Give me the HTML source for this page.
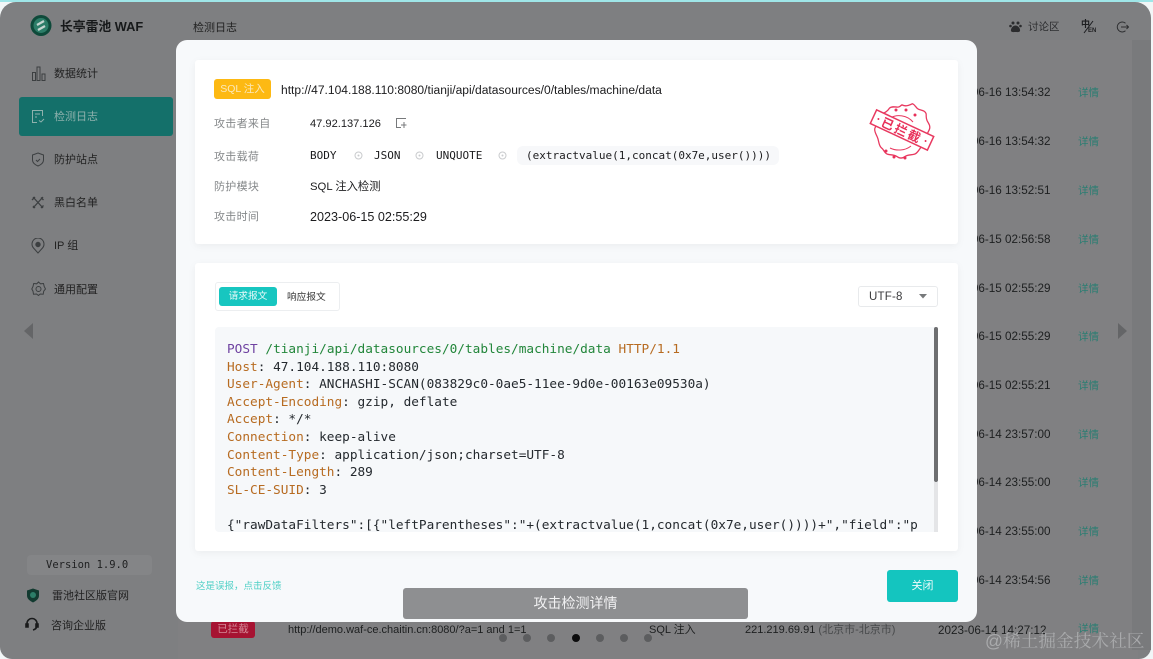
<!DOCTYPE html>
<html><head><meta charset="utf-8"><style>
*{box-sizing:border-box;margin:0;padding:0}
html,body{width:1153px;height:659px;overflow:hidden;background:#f2f6f7}
body{position:relative;font-family:"Liberation Sans","Noto Sans CJK SC",sans-serif;color:#1c1c1e}
.a{position:absolute;white-space:nowrap}
.mono{font-family:"DejaVu Sans Mono","Liberation Mono",monospace}
.nav{left:54px;font-size:11px;color:#222;line-height:16px}
.ic{position:absolute;fill:none;stroke:#3c3f41;stroke-width:1}
.t{font-size:11.7px;color:#1d1f20;left:942px;line-height:14px}
.d{font-size:10.5px;color:#2b7d72;left:1078px;line-height:14px}
.l{font-size:11px;color:#85888a;left:214px;line-height:16px;letter-spacing:.3px}
.v{font-size:12.6px;color:#1c1c1e;left:310px;line-height:16px}
.card{position:absolute;background:#fff;border-radius:3px;box-shadow:0 2px 8px rgba(0,0,0,.05)}
pre{font-family:"DejaVu Sans Mono","Liberation Mono",monospace;font-size:12.75px;line-height:17.6px;color:#24292e;white-space:pre}
.k{color:#b76b21}
.dot{position:absolute;top:634px;width:8px;height:8px;border-radius:50%;background:#5c5d5f}
.m11{font-size:11px;line-height:16px;color:#1c1c1e}
</style></head><body>
<div class="a" style="left:0;top:0;width:1153px;height:2px;background:#9fe6e8"></div>
<div class="a" style="left:0;top:2px;width:1151px;height:657px;background:#7e7f81;border-radius:16px 16px 12px 12px"></div>
<div class="a" style="left:178px;top:40px;width:960px;height:619px;background:#808082"></div>
<div class="a" style="left:1132px;top:40px;width:19px;height:610px;background:#797a7c"></div>

<svg class="a" style="left:30px;top:14px" width="23" height="23" viewBox="0 0 23 23"><circle cx="11" cy="11.500" r="10.500" fill="#0e4a3a"/><circle cx="11" cy="11.500" r="7.500" fill="#2c7d68"/><path d="M7 11l7-4M8 16l7-4" stroke="#c5d5d0" stroke-width="2.200"/></svg>
<div class="a" style="left:60px;top:18px;font-size:12.800px;font-weight:700;color:#17191a;line-height:18px">长亭雷池 WAF</div>
<div class="a" style="left:193px;top:21px;font-size:11px;color:#222;line-height:15px">检测日志</div>

<div class="a" style="left:19px;top:97px;width:154px;height:39px;background:#14706a;border-radius:3px"></div>
<svg class="ic" style="left:31px;top:66px" width="15" height="15" viewBox="0 0 15 15"><path d="M1.500 6.500h3v8h-3zM6 1h3v13.500H6zM11 8h3v6.500h-3z"/></svg>
<svg class="ic" style="left:31px;top:109px;stroke:#8fb1ad" width="14" height="15" viewBox="0 0 14 15"><path d="M6 13.500H1.500v-12h10V7M4 5h5M4 8h2"/><path d="M8 11.500l2 1.500 3-3"/></svg>
<svg class="ic" style="left:31px;top:152px" width="14" height="15" viewBox="0 0 14 15"><path d="M7 1l5.500 2v5c0 3-3 5-5.500 6-2.500-1-5.500-3-5.500-6V3z"/><path d="M5 8l1.500 1.500L9 7"/></svg>
<svg class="ic" style="left:31px;top:195px" width="14" height="15" viewBox="0 0 14 15"><path d="M2 2l10 11M12 2L2 13M1 5l3-3M10 2.500l2.500 2.500M2 11l2 2M10 13l2.500-2.500" stroke-width="1.300"/></svg>
<svg class="ic" style="left:31px;top:238px" width="14" height="16" viewBox="0 0 14 16"><path d="M7 15l-4.500-5a6 6 0 1 1 9 0z"/><circle cx="7" cy="6.500" r="2.200" fill="#3c3f41"/></svg>
<svg class="ic" style="left:31px;top:281px" width="15" height="16" viewBox="0 0 15 16"><path d="M7.500 1l2 1.800 3-.3.700 3 1.300 2.500-1.800 2.200-.5 3-3-.2-1.700 1.500-2-1.500-3 .2-.5-3L.800 8 2 5.500l.7-3 3 .3z"/><circle cx="7.500" cy="8" r="2.500"/></svg>

<div class="a nav" style="top:66px">数据统计</div>
<div class="a nav" style="top:109px;color:#8fb1ad">检测日志</div>
<div class="a nav" style="top:152px">防护站点</div>
<div class="a nav" style="top:195px">黑白名单</div>
<div class="a nav" style="top:238px">IP 组</div>
<div class="a nav" style="top:282px">通用配置</div>
<svg class="a" style="left:24px;top:323px" width="10" height="16"><path d="M9 0v16L0 8z" fill="#646567"/></svg>
<svg class="a" style="left:1118px;top:323px" width="10" height="16"><path d="M0 0v16l9-8z" fill="#646567"/></svg>

<div class="a" style="left:27px;top:555px;width:125px;height:20px;background:#848587;border-radius:4px"></div>
<div class="a mono" style="left:46px;top:558px;font-size:10.500px;line-height:15px;color:#1f2021">Version 1.9.0</div>
<svg class="a" style="left:26px;top:588px" width="14" height="15" viewBox="0 0 14 15"><path d="M7 .5l6 2v5c0 3.500-3 5.500-6 7-3-1.500-6-3.500-6-7v-5z" fill="#123a30"/><circle cx="7" cy="7" r="3" fill="#2c7d68"/></svg>
<div class="a" style="left:52px;top:588px;font-size:11px;color:#222;line-height:16px">雷池社区版官网</div>
<svg class="ic" style="left:25px;top:617px;stroke:#1a1b1c;stroke-width:1.600" width="14" height="15" viewBox="0 0 14 15"><path d="M2 8V6.500a5 5 0 0 1 10 0V8M12 8c0 3-2 4.500-4 5"/><path d="M1 7h2v3H1zM11 7h2v3h-2z" fill="#1a1b1c"/></svg>
<div class="a" style="left:51px;top:618px;font-size:11px;color:#222;line-height:16px">咨询企业版</div>

<svg class="a" style="left:1009px;top:21px" width="13" height="12" viewBox="0 0 13 12"><g fill="#2b2c2e"><circle cx="4" cy="2" r="1.500"/><circle cx="9" cy="2" r="1.500"/><circle cx="1.500" cy="5" r="1.300"/><circle cx="11.500" cy="5" r="1.300"/><path d="M6.500 4.500c2.500 0 5 3 4.500 5.500-.5 1.500-3 1-4.500 1s-4 .5-4.500-1c-.5-2.500 2-5.500 4.500-5.500z"/></g></svg>
<div class="a" style="left:1028px;top:20px;font-size:10.500px;color:#2d2e30;line-height:15px">讨论区</div>
<div class="a" style="left:1081px;top:19px;font-size:9px;color:#1d1e20;line-height:10px;font-weight:700">中</div>
<div class="a" style="left:1088px;top:28px;font-size:6px;color:#1d1e20;line-height:7px;font-weight:700">EN</div>
<svg class="a" style="left:1081px;top:20px" width="15" height="14"><path d="M12 1L3 13" stroke="#1d1e20" stroke-width="1"/></svg>
<svg class="ic" style="left:1115px;top:20px;stroke:#2d2e30" width="14" height="14" viewBox="0 0 14 14"><path d="M10.500 3.200a5 5 0 1 0 0 7.600M6 7h7.500M11.500 5l2 2-2 2"/></svg>

<div class="a t" style="top:86px">2023-06-16 13:54:32</div><div class="a d" style="top:86px">详情</div>
<div class="a t" style="top:135px">2023-06-16 13:54:32</div><div class="a d" style="top:135px">详情</div>
<div class="a t" style="top:184px">2023-06-16 13:52:51</div><div class="a d" style="top:184px">详情</div>
<div class="a t" style="top:233px">2023-06-15 02:56:58</div><div class="a d" style="top:233px">详情</div>
<div class="a t" style="top:282px">2023-06-15 02:55:29</div><div class="a d" style="top:282px">详情</div>
<div class="a t" style="top:330px">2023-06-15 02:55:29</div><div class="a d" style="top:330px">详情</div>
<div class="a t" style="top:379px">2023-06-15 02:55:21</div><div class="a d" style="top:379px">详情</div>
<div class="a t" style="top:428px">2023-06-14 23:57:00</div><div class="a d" style="top:428px">详情</div>
<div class="a t" style="top:476px">2023-06-14 23:55:00</div><div class="a d" style="top:476px">详情</div>
<div class="a t" style="top:525px">2023-06-14 23:55:00</div><div class="a d" style="top:525px">详情</div>
<div class="a t" style="top:574px">2023-06-14 23:54:56</div><div class="a d" style="top:574px">详情</div>

<div class="a" style="left:211px;top:621px;width:44px;height:17px;background:#a61332;border-radius:3px;color:#d58a98;font-size:10.500px;line-height:17px;text-align:center">已拦截</div>
<div class="a" style="left:288px;top:623px;font-size:11px;color:#1d1f20;line-height:15px">http://demo.waf-ce.chaitin.cn:8080/?a=1 and 1=1</div>
<div class="a" style="left:649px;top:623px;font-size:11px;color:#1d1f20;line-height:15px">SQL 注入</div>
<div class="a" style="left:745px;top:623px;font-size:11px;color:#1d1f20;line-height:15px">221.219.69.91 <span style="color:#47494b">(北京市-北京市)</span></div>
<div class="a" style="left:938px;top:623px;font-size:11.700px;color:#1d1f20;line-height:15px">2023-06-14 14:27:12</div>
<div class="a d" style="top:622px">详情</div>

<div class="a" style="left:176px;top:40px;width:801px;height:582px;background:#f7f9fb;border-radius:11px"></div>

<div class="card" style="left:195px;top:60px;width:763px;height:184px"></div>
<div class="a" style="left:214px;top:79px;width:57px;height:20px;background:#fdb913;border-radius:3px;color:#fbe9bb;font-size:10.500px;line-height:21px;text-align:center">SQL 注入</div>
<div class="a" style="left:281px;top:82px;font-size:12.060px;line-height:16px;color:#1c1c1e">http://47.104.188.110:8080/tianji/api/datasources/0/tables/machine/data</div>
<div class="a l" style="top:116px">攻击者来自</div>
<div class="a v" style="top:116px;font-size:11.100px">47.92.137.126</div>
<svg class="ic" style="left:396px;top:118px;stroke:#77797b" width="11" height="11" viewBox="0 0 11 11"><path d="M10 .5H.5v9H5M8 4v6M5 7h5.500"/></svg>
<div class="a l" style="top:149px">攻击载荷</div>
<div class="a mono m11" style="left:310px;top:148px">BODY</div>
<div class="a mono m11" style="left:374px;top:148px">JSON</div>
<div class="a mono m11" style="left:436px;top:148px">UNQUOTE</div>
<svg class="a" style="left:354px;top:151px" width="9" height="9"><circle cx="4.500" cy="4.500" r="3.500" fill="none" stroke="#c9cbcd"/><circle cx="4.500" cy="4.500" r="1" fill="#c9cbcd"/></svg>
<svg class="a" style="left:415px;top:151px" width="9" height="9"><circle cx="4.500" cy="4.500" r="3.500" fill="none" stroke="#c9cbcd"/><circle cx="4.500" cy="4.500" r="1" fill="#c9cbcd"/></svg>
<svg class="a" style="left:498px;top:151px" width="9" height="9"><circle cx="4.500" cy="4.500" r="3.500" fill="none" stroke="#c9cbcd"/><circle cx="4.500" cy="4.500" r="1" fill="#c9cbcd"/></svg>
<div class="a" style="left:517px;top:146px;width:262px;height:19px;background:#f7f8fa;border-radius:6px"></div>
<div class="a mono m11" style="left:526px;top:148px">(extractvalue(1,concat(0x7e,user())))</div>
<div class="a l" style="top:179px">防护模块</div>
<div class="a v" style="top:179px;font-size:11.300px">SQL 注入检测</div>
<div class="a l" style="top:209px">攻击时间</div>
<div class="a v" style="top:209px">2023-06-15 02:55:29</div>

<svg class="a" style="left:868px;top:102px" width="67" height="64" viewBox="0 0 67 64">
<g transform="translate(34 32) scale(1.050 1.120) translate(-34 -31)"><path d="M34 5c4 2 7 0 10-1 3 1 3 4 6 5 3 1 6 1 7 4 0 3 0 5 2 8 2 3 2 5 0 8-2 3-1 5-1 8-1 3-4 4-6 6-2 2-3 5-6 6-3 1-6 0-9 2-3 2-5 2-8 0-3-2-6-1-9-2-3-1-3-4-6-6-2-2-2-5-3-8-1-3-3-5-3-8 0-3 3-4 3-7 0-3 1-6 4-7 3-1 5-2 7-5 2-2 5-1 8-1 2 0 2-1 4-2z" fill="#fff" stroke="#e8385f" stroke-width="1.200" stroke-linejoin="round"/></g>
<path d="M22 16c7-4 17-3 23 4M22 46c6 3 15 3 21-2" fill="none" stroke="#e8385f" stroke-width="1"/>
<g transform="rotate(25 34 28)"><rect x="2.500" y="20.500" width="63" height="15" fill="#fff" stroke="#e8385f" stroke-width="1.500"/><text x="34" y="33" text-anchor="middle" font-size="12.500" font-weight="700" fill="#e8305a" font-family="Liberation Sans,Noto Sans CJK SC,sans-serif" letter-spacing="2">已拦截</text><circle cx="8" cy="28" r="1" fill="#e8305a"/><circle cx="60" cy="28" r="1" fill="#e8305a"/></g>
<g fill="#e8305a"><circle cx="28" cy="8" r="1.500"/><circle cx="38" cy="8" r="1.500"/><circle cx="47" cy="13" r="1.500"/><circle cx="18" cy="49" r="1.500"/><circle cx="26" cy="55" r="1.500"/><circle cx="37" cy="56" r="1.500"/></g>
</svg>

<div class="card" style="left:195px;top:263px;width:763px;height:288px"></div>
<div class="a" style="left:215px;top:282px;width:125px;height:29px;background:#fff;border:1px solid #eceef0;border-radius:3px"></div>
<div class="a" style="left:219px;top:287px;width:58px;height:19px;background:#17c6c0;border-radius:3px;color:#eafafa;font-size:9.700px;line-height:20px;text-align:center">请求报文</div>
<div class="a" style="left:287px;top:290px;font-size:9.700px;line-height:15px;color:#333">响应报文</div>
<div class="a" style="left:858px;top:286px;width:80px;height:21px;background:#fff;border:1px solid #e8eaec;border-radius:3px"></div>
<div class="a" style="left:869px;top:289px;font-size:11.500px;line-height:16px;color:#3a3a3c;letter-spacing:.2px">UTF-8</div>
<svg class="a" style="left:919px;top:294px" width="9" height="6"><path d="M0 0h8L4 4.500z" fill="#77797b"/></svg>

<div class="a" style="left:215px;top:327px;width:723px;height:205px;background:#f6f8fa;border-radius:4px;overflow:hidden">
<pre class="a" style="left:12px;top:14px;white-space:pre"><span style="color:#6f42a1">POST</span> <span style="color:#22863a">/tianji/api/datasources/0/tables/machine/data</span> <span class="k">HTTP/1.1</span>
<span class="k">Host</span>: 47.104.188.110:8080
<span class="k">User-Agent</span>: ANCHASHI-SCAN(083829c0-0ae5-11ee-9d0e-00163e09530a)
<span class="k">Accept-Encoding</span>: gzip, deflate
<span class="k">Accept</span>: */*
<span class="k">Connection</span>: keep-alive
<span class="k">Content-Type</span>: application/json;charset=UTF-8
<span class="k">Content-Length</span>: 289
<span class="k">SL-CE-SUID</span>: 3

{"rawDataFilters":[{"leftParentheses":"+(extractvalue(1,concat(0x7e,user())))+","field":"p</pre>
</div>
<div class="a" style="left:934px;top:327px;width:4px;height:155px;background:#6d6e70;border-radius:2px"></div>
<div class="a" style="left:934px;top:482px;width:4px;height:50px;background:#e4e5e7"></div>

<div class="a" style="left:196px;top:580px;font-size:9.500px;line-height:13px;color:#4fd0c6">这是误报，点击反馈</div>
<div class="a" style="left:887px;top:570px;width:71px;height:32px;background:#14c5bf;border-radius:3px;color:#eefbfb;font-size:11px;line-height:32px;text-align:center">关闭</div>
<div class="a" style="left:403px;top:588px;width:345px;height:31px;background:#8e8f91;border-radius:3px;color:#f2f2f3;font-size:14px;line-height:31px;text-align:center">攻击检测详情</div>

<div class="dot" style="left:499px"></div><div class="dot" style="left:523px"></div><div class="dot" style="left:547px"></div>
<div class="dot" style="left:572px;background:#0c0c0d"></div>
<div class="dot" style="left:596px"></div><div class="dot" style="left:620px"></div><div class="dot" style="left:644px"></div>
<div class="a" style="left:985px;top:631px;font-size:17.700px;line-height:20px;color:#a9aaac;font-family:'Liberation Sans','Noto Serif CJK SC',serif">@稀土掘金技术社区</div>
</body></html>
